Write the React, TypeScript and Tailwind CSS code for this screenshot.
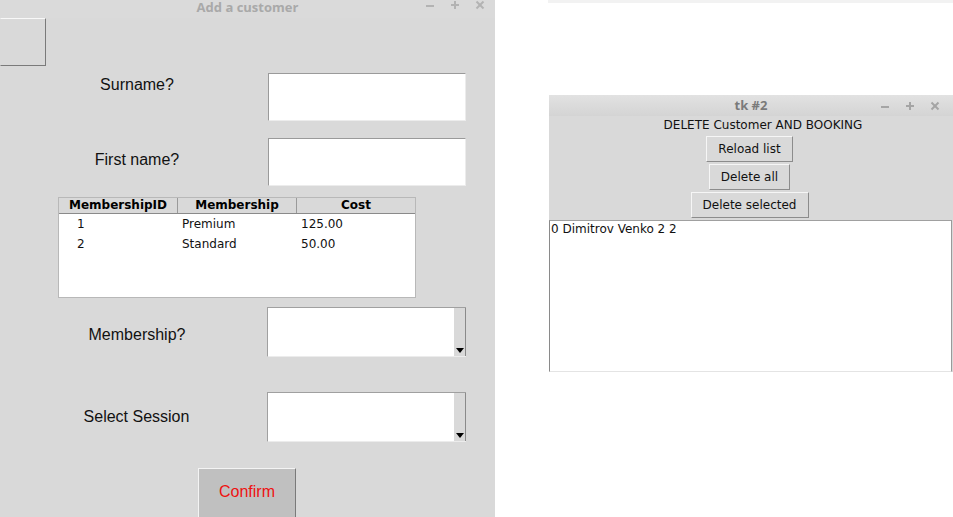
import React from "react";

const tkFont = { fontFamily: '"DejaVu Sans", sans-serif' };
const arial = { fontFamily: '"Liberation Sans", Arial, sans-serif' };
const titleFont = { fontFamily: '"Open Sans", "Noto Sans", sans-serif' };

function WinControls({ color }: { color: string }) {
  return (
    <div className="flex items-center gap-[15px]">
      <svg width="10" height="10" viewBox="0 0 10 10">
        <line x1="1" y1="6" x2="9" y2="6" stroke={color} strokeWidth="2" />
      </svg>
      <svg width="10" height="10" viewBox="0 0 10 10">
        <line x1="1" y1="5" x2="9" y2="5" stroke={color} strokeWidth="2" />
        <line x1="5" y1="1" x2="5" y2="9" stroke={color} strokeWidth="2" />
      </svg>
      <svg width="10" height="10" viewBox="0 0 10 10">
        <line x1="1.5" y1="1.5" x2="8.5" y2="8.5" stroke={color} strokeWidth="2" />
        <line x1="8.5" y1="1.5" x2="1.5" y2="8.5" stroke={color} strokeWidth="2" />
      </svg>
    </div>
  );
}

function Entry({ className = "" }: { className?: string }) {
  return (
    <div
      className={
        "h-[48px] bg-white border-t border-l border-t-[#9a9a9a] border-l-[#9a9a9a] border-b border-r border-b-[#ececec] border-r-[#ececec] " +
        className
      }
    />
  );
}

function Combo() {
  return (
    <div className="flex h-[50px] w-[199px] bg-white border-t border-l border-t-[#a0a0a0] border-l-[#a0a0a0] border-b border-b-[#ececec]">
      <div className="flex-1" />
      <div className="flex w-[12px] flex-col justify-end items-center bg-[#d9d9d9] border-r border-r-[#8a8a8a] pb-[3px]">
        <svg width="8" height="5" viewBox="0 0 8 5">
          <polygon points="0,0 8,0 4,5" fill="#000" />
        </svg>
      </div>
    </div>
  );
}

function Label({ text, pt }: { text: string; pt: string }) {
  return (
    <div className={"w-[268px] pl-[6px] text-center text-[16px] leading-[18px] text-[#111] " + pt} style={arial}>
      {text}
    </div>
  );
}

function TkButton({ label, w }: { label: string; w: string }) {
  return (
    <div
      className={
        "flex h-[26px] items-center justify-center bg-[#d9d9d9] border border-t-[#f6f6f6] border-l-[#f6f6f6] border-b-[#8c8c8c] border-r-[#8c8c8c] text-[12px] text-[#111] " +
        w
      }
      style={tkFont}
    >
      {label}
    </div>
  );
}

export default function App() {
  const members = [
    { id: "1", name: "Premium", cost: "125.00" },
    { id: "2", name: "Standard", cost: "50.00" },
  ];

  return (
    <div className="flex h-[517px] w-[953px] overflow-hidden bg-white">
      {/* Add a customer window */}
      <div className="flex h-[517px] w-[495px] shrink-0 flex-col bg-[#d9d9d9]">
        <div className="relative flex h-[18px] shrink-0 items-start justify-center bg-[#dadada]">
          <span className="text-[13px] leading-[14px] font-bold text-[#a9a9a9]" style={titleFont}>
            Add a customer
          </span>
          <div className="absolute right-[10px] top-0">
            <WinControls color="#b3b3b3" />
          </div>
        </div>

        <div className="h-[48px] w-[46px] shrink-0 border border-t-[#f8f8f8] border-l-[#d9d9d9] border-b-[#7a7a7a] border-r-[#7a7a7a]" />

        {/* Surname */}
        <div className="mt-[7px] flex h-[48px] shrink-0">
          <Label text="Surname?" pt="pt-[3px]" />
          <Entry className="w-[198px]" />
        </div>

        {/* First name */}
        <div className="mt-[17px] flex h-[48px] shrink-0">
          <Label text="First name?" pt="pt-[13px]" />
          <Entry className="w-[198px]" />
        </div>

        {/* Membership table */}
        <div className="ml-[58px] mt-[11px] flex h-[101px] w-[358px] shrink-0 flex-col bg-white border border-[#b8b8b8]" style={tkFont}>
          <div className="grid h-[16px] grid-cols-[119px_119px_1fr] bg-[#d9d9d9] border-b border-b-[#8a8a8a] text-[12px] font-bold leading-[15px] text-black">
            <div className="border-r border-r-[#9a9a9a] text-center">MembershipID</div>
            <div className="border-r border-r-[#9a9a9a] text-center">Membership</div>
            <div className="text-center">Cost</div>
          </div>
          {members.map((m) => (
            <div key={m.id} className="grid h-[20px] grid-cols-[119px_119px_1fr] items-center text-[12px] text-[#111]">
              <div className="pl-[18px]">{m.id}</div>
              <div className="pl-[4px]">{m.name}</div>
              <div className="pl-[4px]">{m.cost}</div>
            </div>
          ))}
        </div>

        {/* Membership combo */}
        <div className="mt-[9px] flex h-[50px] shrink-0">
          <Label text="Membership?" pt="pt-[19px]" />
          <div className="-ml-[1px]">
            <Combo />
          </div>
        </div>

        {/* Session combo */}
        <div className="mt-[35px] flex h-[50px] shrink-0">
          <div className="w-[268px] pl-[5px] pt-[16px] text-center text-[16px] leading-[18px] text-[#111]" style={arial}>
            Select Session
          </div>
          <div className="-ml-[1px]">
            <Combo />
          </div>
        </div>

        {/* Confirm */}
        <div className="ml-[198px] mt-[26px] flex h-[50px] w-[98px] shrink-0 items-center justify-center bg-[#c0c0c0] border border-t-[#f4f4f4] border-l-[#f4f4f4] border-b-[#7a7a7a] border-r-[#7a7a7a] pb-[2px] text-[16px] text-[#ee1111]" style={arial}>
          Confirm
        </div>
      </div>

      {/* Right side */}
      <div className="flex flex-1 flex-col">
        <div className="ml-[53px] h-[3px] bg-[#f2f2f2]" />
        <div className="ml-[54px] mt-[92px] flex h-[277px] flex-col bg-[#d9d9d9]">
          <div className="relative flex h-[21px] items-center justify-center bg-gradient-to-b from-[#e2e2e2] to-[#d4d4d4]">
            <span className="text-[13px] font-bold text-[#7a7a7a]" style={titleFont}>
              tk #2
            </span>
            <div className="absolute right-[13px] top-[6px]">
              <WinControls color="#a5a5a5" />
            </div>
          </div>
          <div className="h-[20px] pl-[24px] text-center text-[12px] leading-[19px] text-[#111]" style={tkFont}>
            DELETE Customer AND BOOKING
          </div>
          <div className="flex flex-col items-center gap-[2px] pr-[3px]">
            <TkButton label="Reload list" w="w-[87px]" />
            <TkButton label="Delete all" w="w-[81px]" />
            <TkButton label="Delete selected" w="w-[118px]" />
          </div>
          <div className="mt-[2px] flex-1 bg-white border-t border-l border-r border-t-[#a0a0a0] border-l-[#8a8a8a] border-r-[#9a9a9a] border-b border-b-[#e4e4e4] mr-[1px] px-[1px] text-[12px] leading-[16px] text-[#111]" style={tkFont}>
            0 Dimitrov Venko 2 2
          </div>
        </div>
      </div>
    </div>
  );
}
